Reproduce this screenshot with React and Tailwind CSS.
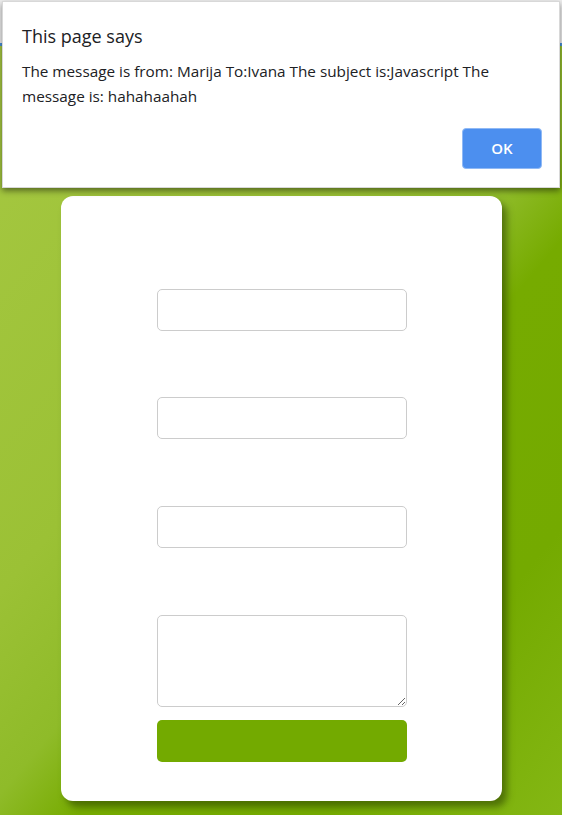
import React from 'react';

const Field = ({ className = '' }) => (
    <input
        type="text"
        className={`block w-[250px] h-[42px] border border-[#cccccc] rounded-[5px] bg-white outline-none ${className}`}
    />
);

const App = () => {
    return (
        <div className="relative w-full min-h-[815px] overflow-hidden font-['Open_Sans','Noto_Sans',sans-serif]">
            {/* Page behind the alert */}
            <div className="h-[46px] bg-[#eeeeee] border-b-[3px] border-[#4a90d9]" />
            <div className="h-[769px] bg-[linear-gradient(130deg,#a6c842_0%,#9bc135_38%,#8fbb29_52%,#76ab00_60%,#74aa00_80%,#84b714_100%)] pt-[150px]">
                {/* Form card */}
                <div className="ml-[61px] w-[441px] h-[605px] bg-white rounded-[12px] shadow-[5px_6px_7px_rgba(40,60,0,0.55)] flex flex-col items-start pl-[96px] pt-[93px]">
                    <Field />
                    <Field className="mt-[66px]" />
                    <Field className="mt-[67px]" />
                    <textarea className="block mt-[67px] w-[250px] h-[92px] border border-[#cccccc] rounded-[5px] bg-white outline-none resize" />
                    <button className="mt-[13px] w-[250px] h-[42px] rounded-[5px] bg-[#73aa00]" />
                </div>
            </div>

            {/* Browser alert dialog */}
            <div className="absolute left-[2px] top-[1px] w-[558px] h-[187px] bg-white border border-[#d8d8d8] shadow-[0_3px_6px_rgba(0,0,0,0.45)] pl-[19px] pr-[17px] pt-[23px] text-[#202124]">
                <h2 className="text-[18px] leading-[22px]">This page says</h2>
                <p className="mt-[12px] text-[15.3px] leading-[25px] pr-[20px]">
                    The message is from: Marija To:Ivana The subject is:Javascript The message is: hahahaahah
                </p>
                <div className="flex justify-end mt-[19px]">
                    <button className="w-[80px] h-[41px] rounded-[4px] bg-[#4c8fef] border border-[#8fb9f5] text-white text-[15px] font-semibold">
                        OK
                    </button>
                </div>
            </div>
        </div>
    );
};

export default App;
